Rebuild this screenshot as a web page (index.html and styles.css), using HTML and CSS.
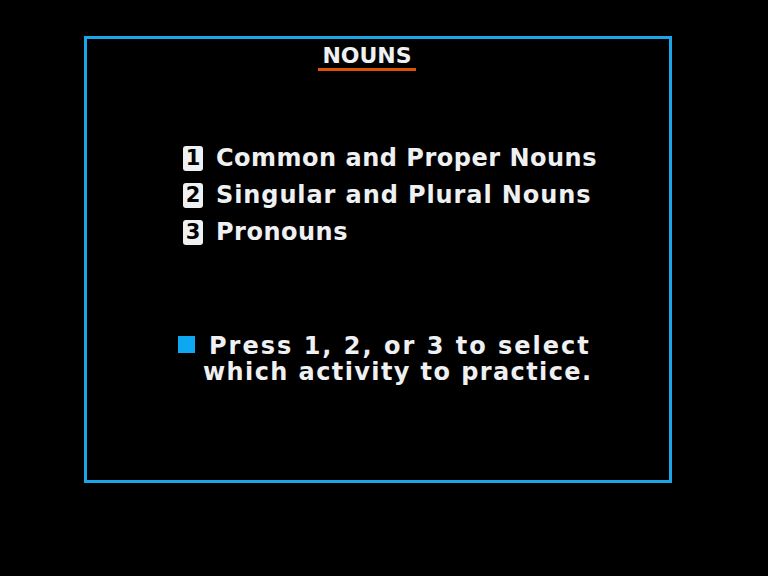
FILE: index.html
```html
<!DOCTYPE html>
<html>
<head>
<meta charset="utf-8">
<link rel="stylesheet" href="styles.css">
</head>
<body>
<div class="frame">
  <div class="title">NOUNS</div>
  <ul class="menu">
    <li><span class="key">1</span><span class="label">Common and Proper Nouns</span></li>
    <li><span class="key">2</span><span class="label label-wide">Singular and Plural Nouns</span></li>
    <li><span class="key">3</span><span class="label">Pronouns</span></li>
  </ul>
  <div class="prompt">
    <span class="bullet"></span>
    <div class="prompt-text">
      <div class="l1">Press 1, 2, or 3 to select</div>
      <div class="l2">which activity to practice.</div>
    </div>
  </div>
</div>
</body>
</html>
```
FILE: styles.css
```css
html, body {
  margin: 0;
  padding: 0;
  background: #000;
}
body {
  width: 768px;
  height: 576px;
  overflow: hidden;
  font-family: "DejaVu Sans", sans-serif;
  font-weight: bold;
  color: #eef0f2;
}
.frame {
  box-sizing: border-box;
  margin: 36px 0 0 84px;
  width: 588px;
  height: 447px;
  border: 3px solid #1ba6ea;
  display: flex;
  flex-direction: column;
}
.title {
  align-self: center;
  margin: 6px 22px 0 0;
  font-size: 22px;
  line-height: 22px;
  padding: 0 4px 1px 4px;
  border-bottom: 3px solid #e0500a;
}
.menu {
  list-style: none;
  margin: 74px 0 0 96px;
  padding: 0;
  display: flex;
  flex-direction: column;
  gap: 11px;
}
.menu li {
  display: flex;
  align-items: center;
  height: 26px;
}
.key {
  width: 20px;
  height: 25px;
  background: #eef0f2;
  color: #000;
  border-radius: 3px;
  font-size: 21px;
  line-height: 25px;
  text-align: center;
  margin-right: 13px;
}
.label {
  font-size: 24px;
  letter-spacing: 0.5px;
}
.label-wide {
  letter-spacing: 0.9px;
}
.prompt {
  display: flex;
  margin: 88px 0 0 91px;
}
.bullet {
  width: 17px;
  height: 17px;
  background: #0ea8f2;
  margin-top: 3px;
  margin-right: 14px;
}
.prompt-text {
  font-size: 24px;
  line-height: 26px;
}
.l1 {
  letter-spacing: 2px;
}
.l2 {
  margin-left: -6px;
  letter-spacing: 1.4px;
}
```
